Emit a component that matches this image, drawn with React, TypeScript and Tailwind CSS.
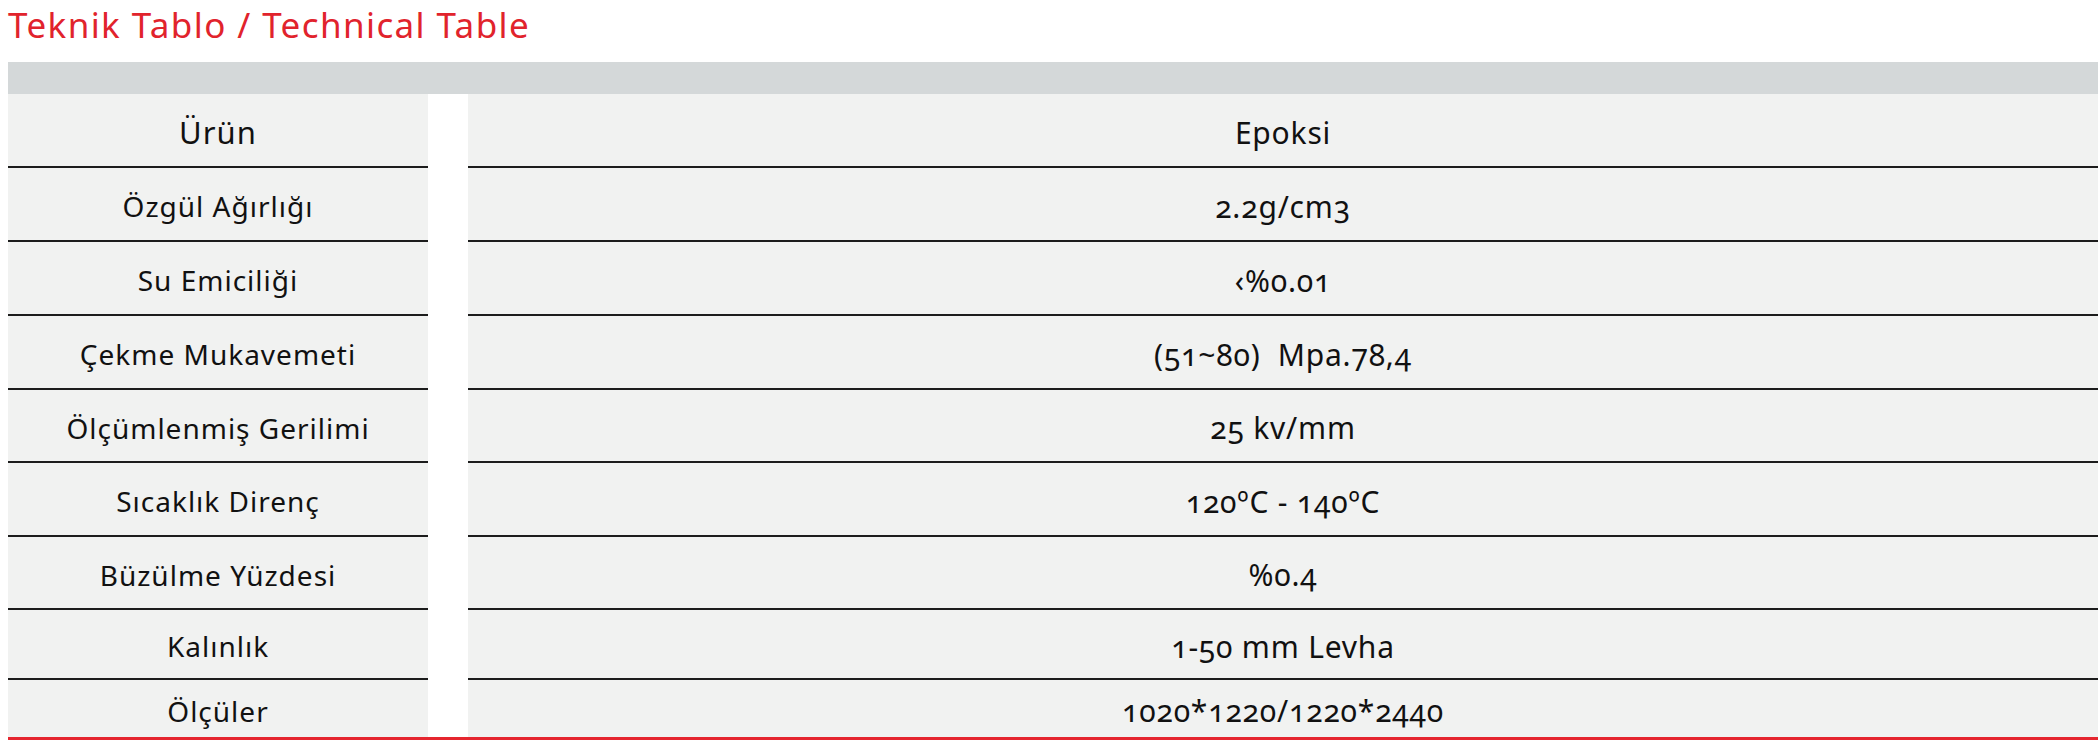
const rows: { label: string; value: string; h: string; big?: boolean }[] = [
  { label: "Ürün", value: "Epoksi", h: "h-[74px]", big: true },
  { label: "Özgül Ağırlığı", value: "2.2g/cm3", h: "h-[74px]" },
  { label: "Su Emiciliği", value: "‹%0.01", h: "h-[74px]" },
  { label: "Çekme Mukavemeti", value: "(51~80)  Mpa.78,4", h: "h-[74px]" },
  { label: "Ölçümlenmiş Gerilimi", value: "25 kv/mm", h: "h-[73px]" },
  { label: "Sıcaklık Direnç", value: "120ºC - 140ºC", h: "h-[74px]" },
  { label: "Büzülme Yüzdesi", value: "%0.4", h: "h-[73px]" },
  { label: "Kalınlık", value: "1-50 mm Levha", h: "h-[70px]" },
  { label: "Ölçüler", value: "1020*1220/1220*2440", h: "h-[57px]" },
];

export default function App() {
  return (
    <div className="min-h-screen bg-white font-['Noto_Sans',sans-serif] text-[#111]">
      <h2 className="h-[62px] pl-2 pt-[3px] text-[35px] leading-[44px] tracking-[1.4px] text-[#e1232c]">
        Teknik Tablo / Technical Table
      </h2>
      <div className="ml-2 border-b-[3px] border-[#e5262f]">
        <div className="h-[32px] bg-[#d4d8d9]" />
        {rows.map((r, i) => {
          const last = i === rows.length - 1;
          return (
            <div key={r.label} className={`flex ${r.h}`}>
              <div
                className={`flex w-[420px] items-center justify-center bg-[#f1f2f1] pt-[4px] tracking-[1px] ${
                  last ? "" : "border-b-2 border-[#1c1c1c]"
                } ${r.big ? "text-[31px]" : "text-[28px]"}`}
              >
                {r.label}
              </div>
              <div className="w-[40px] bg-white" />
              <div
                className={`flex flex-1 items-center justify-center whitespace-pre bg-[#f1f2f1] pt-[4px] tracking-[0.8px] oldstyle-nums ${
                  last ? "" : "border-b-2 border-[#1c1c1c]"
                } ${r.big ? "text-[30px]" : "text-[30px]"}`}
              >
                {r.value}
              </div>
            </div>
          );
        })}
      </div>
    </div>
  );
}
